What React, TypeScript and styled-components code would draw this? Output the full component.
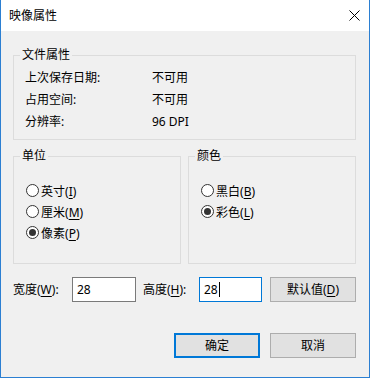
import React from "react";
import styled, { createGlobalStyle } from "styled-components";

const GlobalStyle = createGlobalStyle`
  html, body {
    margin: 0;
    padding: 0;
    background: #ffffff;
  }
  body {
    font-family: "Noto Sans", "Noto Sans CJK SC", sans-serif;
    font-size: 12px;
    color: #000000;
  }
`;

const Window = styled.div`
  width: 370px;
  height: 378px;
  box-sizing: border-box;
  border: 1px solid #2b7fd2;
  border-top: none;
  display: flex;
  flex-direction: column;
  background: #f0f0f0;
`;

const TitleBar = styled.div`
  height: 31px;
  flex: none;
  background: #ffffff;
  display: flex;
  align-items: center;
  justify-content: space-between;
  padding: 0 9px 0 8px;
`;

const Title = styled.span`
  font-size: 12px;
  line-height: 16px;
  padding-top: 1px;
`;

const Body = styled.div`
  flex: 1;
  padding: 16px 13px 0 12px;
  display: flex;
  flex-direction: column;
`;

const Group = styled.fieldset<{ $bottom?: number }>`
  margin: 0;
  border: 1px solid #dcdcdc;
  padding: 0 0 ${(p) => p.$bottom ?? 7}px 6px;
  min-width: 0;
`;

const Legend = styled.legend`
  padding: 0 2px;
  line-height: 16px;
  font-size: 12px;
`;

const InfoList = styled.div`
  margin-top: 3px;
  padding-left: 5px;
  display: flex;
  flex-direction: column;
`;

const InfoRow = styled.div`
  height: 22px;
  display: grid;
  grid-template-columns: 127px 1fr;
  align-items: center;
`;

const GroupRow = styled.div`
  margin-top: 8px;
  display: grid;
  grid-template-columns: 168px 168px;
  column-gap: 7px;
`;

const RadioList = styled.div`
  margin-top: 16px;
  padding-left: 6px;
  display: flex;
  flex-direction: column;
`;

const RadioRow = styled.div`
  height: 21px;
  display: flex;
  align-items: center;
`;

const RadioCircle = styled.span<{ $checked?: boolean }>`
  flex: none;
  width: 13px;
  height: 13px;
  box-sizing: border-box;
  border: 1px solid #333333;
  border-radius: 50%;
  background: #ffffff;
  margin-right: 2px;
  display: flex;
  align-items: center;
  justify-content: center;

  &::after {
    content: "";
    display: ${(p) => (p.$checked ? "block" : "none")};
    width: 7px;
    height: 7px;
    border-radius: 50%;
    background: #333333;
  }
`;

const Key = styled.span`
  text-decoration: underline;
  text-underline-offset: 2px;
`;

const SizeRow = styled.div`
  margin-top: 13px;
  display: grid;
  grid-template-columns: 59px 64px 7px 56px 63px 8px 86px;
  align-items: center;
  height: 25px;
`;

const FieldLabel = styled.span`
  line-height: 16px;
`;

const TextBox = styled.div<{ $focused?: boolean }>`
  height: 25px;
  box-sizing: border-box;
  border: 1px solid ${(p) => (p.$focused ? "#0078d7" : "#7a7a7a")};
  background: #ffffff;
  display: flex;
  align-items: center;
  padding-left: 4px;
  line-height: 16px;
`;

const Caret = styled.span`
  display: inline-block;
  width: 1px;
  height: 15px;
  background: #000000;
  margin-left: 1px;
`;

const Button = styled.div<{ $default?: boolean }>`
  height: 25px;
  box-sizing: border-box;
  border: ${(p) => (p.$default ? "2px solid #0078d7" : "1px solid #adadad")};
  background: #e1e1e1;
  display: flex;
  align-items: center;
  justify-content: center;
  line-height: 16px;
`;

const Footer = styled.div`
  margin-top: 31px;
  display: flex;
  justify-content: flex-end;
  gap: 10px;
`;

const FooterButton = styled(Button)`
  width: 86px;
`;

const Spacer = styled.span``;

const CloseIcon = () => (
  <svg width="11" height="11" viewBox="0 0 11 11">
    <path d="M0.5 0.5 L10.5 10.5 M10.5 0.5 L0.5 10.5" stroke="#000" strokeWidth="1" />
  </svg>
);

const Radio: React.FC<{ label: string; k: string; checked?: boolean }> = ({
  label,
  k,
  checked,
}) => (
  <RadioRow>
    <RadioCircle $checked={checked} />
    <span>
      {label}(<Key>{k}</Key>)
    </span>
  </RadioRow>
);

const info = [
  ["上次保存日期:", "不可用"],
  ["占用空间:", "不可用"],
  ["分辨率:", "96 DPI"],
];

export default function App() {
  return (
    <>
      <GlobalStyle />
      <Window>
        <TitleBar>
          <Title>映像属性</Title>
          <CloseIcon />
        </TitleBar>
        <Body>
          <Group>
            <Legend>文件属性</Legend>
            <InfoList>
              {info.map(([label, value]) => (
                <InfoRow key={label}>
                  <span>{label}</span>
                  <span>{value}</span>
                </InfoRow>
              ))}
            </InfoList>
          </Group>

          <GroupRow>
            <Group $bottom={20}>
              <Legend>单位</Legend>
              <RadioList>
                <Radio label="英寸" k="I" />
                <Radio label="厘米" k="M" />
                <Radio label="像素" k="P" checked />
              </RadioList>
            </Group>
            <Group $bottom={20}>
              <Legend>颜色</Legend>
              <RadioList>
                <Radio label="黑白" k="B" />
                <Radio label="彩色" k="L" checked />
              </RadioList>
            </Group>
          </GroupRow>

          <SizeRow>
            <FieldLabel>
              宽度(<Key>W</Key>):
            </FieldLabel>
            <TextBox>28</TextBox>
            <Spacer />
            <FieldLabel>
              高度(<Key>H</Key>):
            </FieldLabel>
            <TextBox $focused>
              28
              <Caret />
            </TextBox>
            <Spacer />
            <Button>
              默认值(<Key>D</Key>)
            </Button>
          </SizeRow>

          <Footer>
            <FooterButton $default>确定</FooterButton>
            <FooterButton>取消</FooterButton>
          </Footer>
        </Body>
      </Window>
    </>
  );
}
